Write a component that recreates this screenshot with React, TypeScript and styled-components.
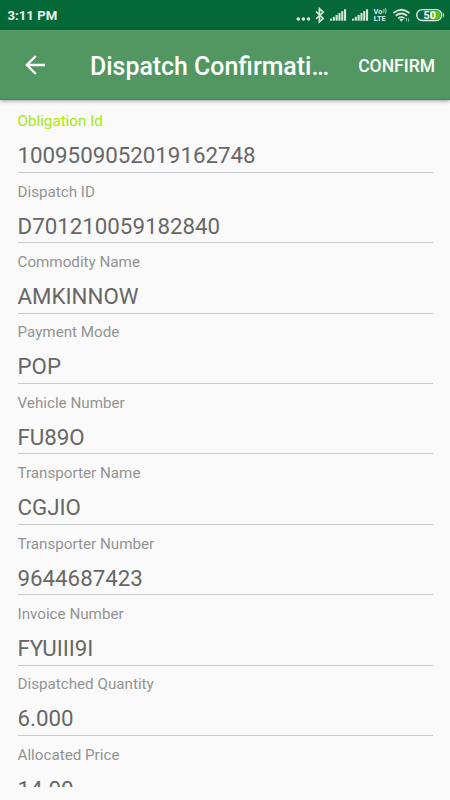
import React from 'react';
import styled, { createGlobalStyle } from 'styled-components';

const GlobalStyle = createGlobalStyle`
  * { box-sizing: border-box; }
  body { margin: 0; background: #fafafa; font-family: Roboto, sans-serif; }
`;

const Screen = styled.div`
  display: flex;
  flex-direction: column;
  width: 450px;
  height: 800px;
  overflow: hidden;
  background: #fafafa;
`;

const StatusBar = styled.header`
  display: flex;
  align-items: center;
  justify-content: space-between;
  flex: 0 0 30px;
  padding-left: 7.5px;
  background: #056839;
  color: #e9f2ed;
`;

const Clock = styled.time`
  padding-top: 2px;
  font-size: 13.2px;
  line-height: 28px;
  font-weight: 700;
`;

const StatusIcons = styled.svg`
  display: block;
  width: 160px;
  height: 30px;
`;

const AppBar = styled.nav`
  display: flex;
  align-items: center;
  flex: 0 0 70px;
  z-index: 1;
  padding: 0 15px 0 25px;
  background: #529761;
  border-top: 1px solid #599e68;
  border-bottom: 1px solid #378b4c;
  box-shadow: 0 1px 4px rgba(0, 0, 0, 0.38);
  color: #fff;
`;

const BackButton = styled.button`
  display: flex;
  width: 20px;
  height: 20px;
  margin-right: 45px;
  padding: 0;
  border: 0;
  background: none;
  color: inherit;
`;

const Title = styled.h1`
  flex: 1;
  margin: 0;
  padding-top: 3px;
  font-size: 24.9px;
  line-height: 32px;
  font-weight: 500;
  white-space: nowrap;
`;

const ConfirmButton = styled.button`
  padding: 2px 0 0;
  border: 0;
  background: none;
  color: inherit;
  font: 500 17.5px/24px Roboto, sans-serif;
`;

const Form = styled.main`
  flex: 0 0 687px;
  height: 687px;
  overflow: hidden;
  padding: 2.4px 17.5px 0;
`;

const Field = styled.div`
  height: 70.4px;
  padding-top: 8.8px;
  border-bottom: 1px solid #cbcbcb;
`;

const Label = styled.div<{ $active?: boolean }>`
  font-size: 15.2px;
  line-height: 20px;
  color: ${({ $active }) => ($active ? '#a4e80c' : '#939393')};
`;

const Value = styled.div`
  margin-top: 10px;
  font-size: 22.3px;
  line-height: 28px;
  color: #676767;
`;

const fields = [
  ['Obligation Id', '1009509052019162748'],
  ['Dispatch ID', 'D701210059182840'],
  ['Commodity Name', 'AMKINNOW'],
  ['Payment Mode', 'POP'],
  ['Vehicle Number', 'FU89O'],
  ['Transporter Name', 'CGJIO'],
  ['Transporter Number', '9644687423'],
  ['Invoice Number', 'FYUIII9I'],
  ['Dispatched Quantity', '6.000'],
  ['Allocated Price', '14.00'],
];

const bars = [0, 1, 2, 3, 4, 5];

function Signal({ x }: { x: number }) {
  return (
    <g fill="#d5e5dc">
      {bars.map((i) => (
        <rect key={i} x={x + i * 2.8} y={18.7 - i * 1.9} width="2.1" height={2 + i * 1.9} />
      ))}
    </g>
  );
}

function Indicators() {
  return (
    <StatusIcons viewBox="0 0 160 30" fontFamily="Roboto, sans-serif" fontWeight="700">
      <g fill="#e2eee7">
        <circle cx="8.3" cy="19" r="1.8" />
        <circle cx="13.4" cy="19" r="1.8" />
        <circle cx="18.5" cy="19" r="1.8" />
      </g>
      <path d="M26 11.5l7.2 7-3.8 3.3V8.7l3.8 3.3-7.2 7" fill="none" stroke="#d5e5dc" strokeWidth="1.7" />
      <Signal x={40} />
      <Signal x={62} />
      <g fill="#dcebe2">
        <text x="83.5" y="13.6" fontSize="7.5">Vo</text>
        <text x="83.8" y="21" fontSize="7.4">LTE</text>
      </g>
      <path d="M93.6 9q1.2 1.9 0 3.8M95.3 8.1q1.8 2.8 0 5.6" fill="none" stroke="#c8ded1" strokeWidth="0.9" />
      <g fill="none" stroke="#d5e5dc" strokeWidth="1.8">
        <path d="M103.4 13q8-6.6 16 0M105.8 15.8q5.6-4.5 11.2 0M108.2 18.4q3.2-2.4 6.4 0" />
      </g>
      <path d="M109.3 19.3q2.1-1.3 4.2 0l-2.1 2.4z" fill="#d5e5dc" />
      <path d="M116.5 21.5v-3.5l-1 1M118.4 18v3.5l1-1" fill="none" stroke="#bdd6c8" strokeWidth="0.7" />
      <rect x="126.7" y="9.6" width="25" height="10.9" rx="5.4" fill="none" stroke="#e2eee7" strokeWidth="1.4" />
      <path d="M140 11h6.5a4.1 4.1 0 0 1 0 8.2H140z" fill="#56c516" />
      <path d="M153 12.8q1.5 2.2 0 4.5" fill="none" stroke="#d5e5dc" />
      <text x="133.5" y="18.9" fontSize="10.8" fill="#fff">50</text>
    </StatusIcons>
  );
}

export default function App() {
  return (
    <Screen>
      <GlobalStyle />
      <StatusBar>
        <Clock>3:11 PM</Clock>
        <Indicators />
      </StatusBar>
      <AppBar>
        <BackButton aria-label="Back">
          <svg width="20" height="20" viewBox="0 0 20 20">
            <path d="M20 10H2M10.8 1L1.8 10l9 9" fill="none" stroke="currentColor" strokeWidth="2.3" />
          </svg>
        </BackButton>
        <Title>Dispatch Confirmati…</Title>
        <ConfirmButton>CONFIRM</ConfirmButton>
      </AppBar>
      <Form>
        {fields.map(([label, value], index) => (
          <Field key={label}>
            <Label $active={index === 0}>{label}</Label>
            <Value>{value}</Value>
          </Field>
        ))}
      </Form>
    </Screen>
  );
}
